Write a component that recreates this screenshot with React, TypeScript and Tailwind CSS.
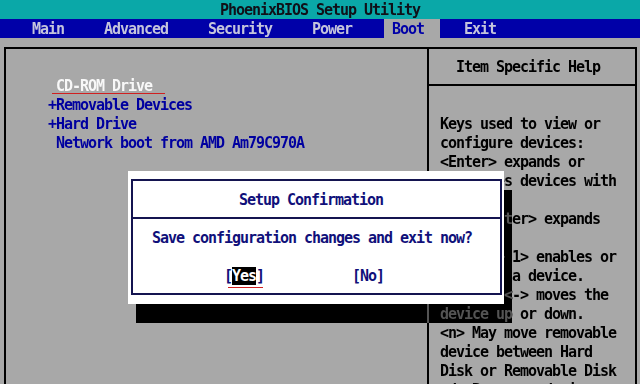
const mono = "font-['DejaVu_Sans_Mono',monospace] text-[15px] leading-[19px] tracking-[-1.03px] font-bold whitespace-pre"

const HELP = [
  'Keys used to view or',
  'configure devices:',
  '<Enter> expands or',
  'collapses devices with',
  'a + or -',
  '<Ctrl+Enter> expands',
  'all',
  '<Shift + 1> enables or',
  'disables a device.',
  '<+> and <-> moves the',
  'device up or down.',
  '<n> May move removable',
  'device between Hard',
  'Disk or Removable Disk',
  '<d> Remove a device',
]

function MenuBar() {
  return (
    <div className="h-[19px] overflow-hidden bg-[#0000a8] flex pl-[32px] text-[#c4c4dc]">
      <span className="w-[72px] pt-px">Main</span>
      <span className="w-[104px] pt-px">Advanced</span>
      <span className="w-[104px] pt-px">Security</span>
      <span className="w-[72px] pt-px">Power</span>
      <span className="w-[56px] pt-px pl-[8px] bg-[#a8a8a8] text-[#0000a8]">Boot</span>
      <span className="ml-[24px] pt-px">Exit</span>
    </div>
  )
}

function BootList() {
  return (
    <div className="w-[421px] pt-[28px] pl-[42px] text-[#0000a0]">
      <div className="relative text-[#f8f8f8]">
        {' CD-ROM Drive'}
        <div className="absolute left-[4px] top-[16px] w-[113px] h-px bg-[#d02020]" />
      </div>
      <div>+Removable Devices</div>
      <div>+Hard Drive</div>
      <div>{' Network boot from AMD Am79C970A'}</div>
    </div>
  )
}

function HelpPanel() {
  return (
    <div className="w-[208px] border-l-2 border-black text-black">
      <div className="h-[37px] border-b-2 border-black pt-[9px] pl-[27px]">Item Specific Help</div>
      <div className="pt-[29px] pl-[11px]">
        {HELP.map(line => <div key={line}>{line}</div>)}
      </div>
    </div>
  )
}

function ConfirmDialog() {
  return (
    <div className="absolute left-[128px] top-[171px] w-[376px] h-[133px] bg-white pt-[8px] pl-[3px]">
      <div className="w-[371px] h-[116px] border-2 border-[#141450] text-[#10107a]">
        <div className="h-[38px] border-b-2 border-[#141450] pt-[10px] pl-[106px]">Setup Confirmation</div>
        <div className="pt-[10px] pl-[19px]">Save configuration changes and exit now?</div>
        <div className="mt-[19px] flex pl-[91px]">
          <span className="relative w-[128px]">
            [<span className="bg-black text-white">Yes</span>]
            <span className="absolute left-[4px] top-[20px] w-[35px] h-px bg-[#d02020]" />
          </span>
          <span>[No]</span>
        </div>
      </div>
    </div>
  )
}

export default function App() {
  return (
    <div className={`relative w-[640px] h-[384px] overflow-hidden bg-[#a8a8a8] ${mono}`}>
      <div className="h-[19px] overflow-hidden pt-px bg-[#0aa8a8] text-center text-[#101018]">PhoenixBIOS Setup Utility</div>
      <MenuBar />
      <div className="pt-[9px] pl-[4px]">
        <div className="w-[633px] h-[360px] border-2 border-black flex">
          <BootList />
          <HelpPanel />
        </div>
      </div>

      {/* text-mode drop shadow: invert gray to black, then dim */}
      <div className="absolute left-[136px] top-[190px] w-[376px] h-[133px] bg-[#a8a8a8] mix-blend-difference" />
      <div className="absolute left-[136px] top-[190px] w-[376px] h-[133px] bg-black/50" />

      <ConfirmDialog />
    </div>
  )
}
